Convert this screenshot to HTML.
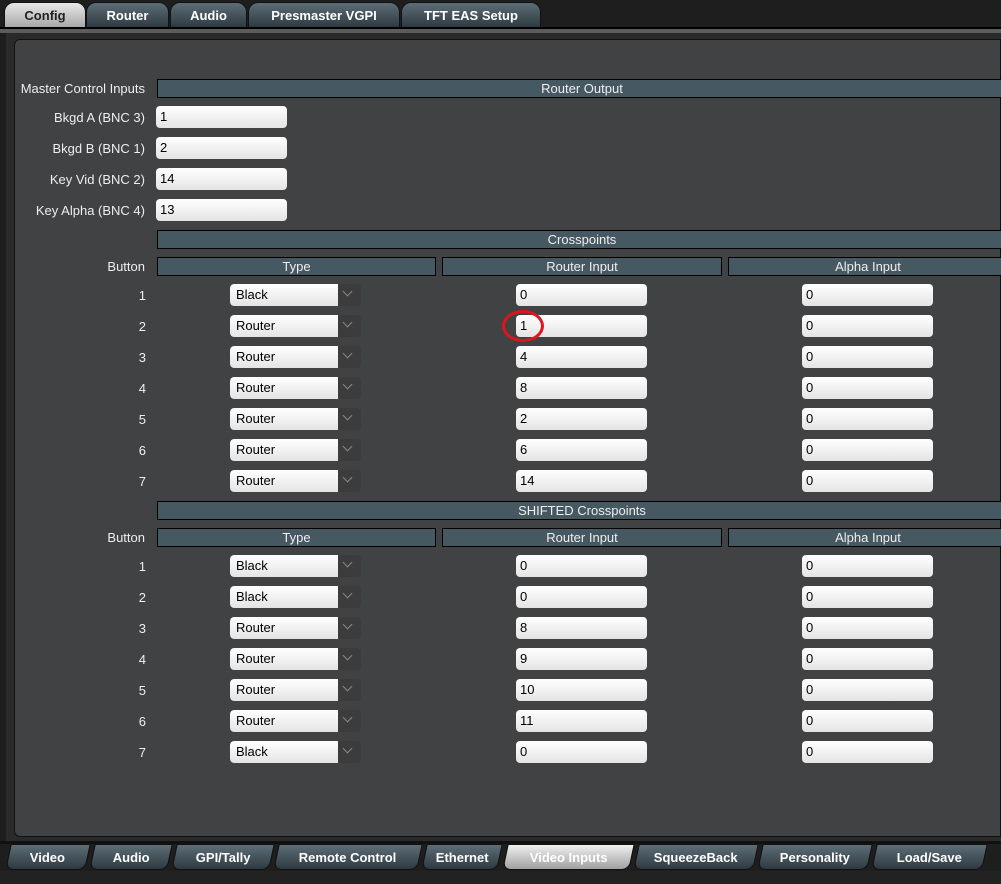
<!DOCTYPE html>
<html><head><meta charset="utf-8"><style>
*{box-sizing:border-box;margin:0;padding:0}
body{width:1001px;height:884px;background:#1e1e1e;position:relative;overflow:hidden;font-family:"Liberation Sans",sans-serif;font-size:13px;color:#fff}
.a{position:absolute}
.tab{position:absolute;top:2px;height:26px;border-radius:10px 10px 0 0;background:linear-gradient(#5d6d76,#2e3a41);color:#fff;font-weight:bold;font-size:13px;text-align:center;line-height:26px;border:1px solid #111}
.tab.on{background:linear-gradient(#e8e8e8,#a8a8a8);color:#222}
.btab{position:absolute;top:844px;height:26px;border-radius:0 0 8px 8px;background:linear-gradient(#5d6d76,#2e3a41);color:#fff;font-weight:bold;font-size:13px;text-align:center;line-height:26px;border:1px solid #111;transform:skewX(-12deg)}
.btab span{display:inline-block;transform:skewX(12deg)}
.btab.on{background:linear-gradient(#f0f0f0,#a0a0a0);color:#fff}
.hdr{position:absolute;height:19px;background:#465861;border:1px solid #000;text-align:center;line-height:17px;color:#eee}
.lbl{position:absolute;text-align:right;color:#eee;line-height:16px}
.in{position:absolute;width:131px;height:22px;background:linear-gradient(#fff,#e4e4e4);border-radius:4px;color:#000;padding-left:4px;line-height:22px}
.sel{position:absolute;left:230px;width:131px;height:22px;border-radius:4px;overflow:hidden;background:#3c3c3c}
.sel b{position:absolute;left:0;top:0;width:108px;height:22px;background:linear-gradient(#fff,#e4e4e4);color:#000;font-weight:normal;padding-left:6px;line-height:22px;border-radius:4px 0 0 4px}
.sel i{position:absolute;left:114px;top:4px;width:7px;height:7px;border-right:1px solid #888;border-bottom:1px solid #888;transform:rotate(45deg)}
.num{position:absolute;left:120px;width:26px;text-align:right;color:#eee}
</style></head><body>
<div class="tab on" style="left:4px;width:82px">Config</div>
<div class="tab" style="left:86px;width:83px">Router</div>
<div class="tab" style="left:170px;width:77px">Audio</div>
<div class="tab" style="left:248px;width:152px">Presmaster VGPI</div>
<div class="tab" style="left:401px;width:140px">TFT EAS Setup</div>
<div class="a" style="left:0;top:27px;width:1001px;height:2px;background:#000"></div>
<div class="a" style="left:0;top:29px;width:1001px;height:4px;background:#5c5c5c"></div>
<div class="a" style="left:6px;top:33px;width:995px;height:808px;background:#2a2a2a"></div>
<div class="a" style="left:14px;top:39px;width:987px;height:798px;background:#414243;border-radius:6px 0 0 6px;border:1px solid #111"></div>

<div class="lbl" style="left:0;top:81px;width:145px">Master Control Inputs</div>
<div class="hdr" style="left:157px;top:79px;width:850px">Router Output</div>
<div class="lbl" style="left:0;top:110px;width:145px">Bkgd A (BNC 3)</div><div class="in" style="left:156px;top:106px">1</div>
<div class="lbl" style="left:0;top:141px;width:145px">Bkgd B (BNC 1)</div><div class="in" style="left:156px;top:137px">2</div>
<div class="lbl" style="left:0;top:172px;width:145px">Key Vid (BNC 2)</div><div class="in" style="left:156px;top:168px">14</div>
<div class="lbl" style="left:0;top:203px;width:145px">Key Alpha (BNC 4)</div><div class="in" style="left:156px;top:199px">13</div>

<div class="hdr" style="left:157px;top:230px;width:850px">Crosspoints</div>
<div class="lbl" style="left:0;top:259px;width:145px">Button</div>
<div class="hdr" style="left:157px;top:257px;width:279px">Type</div>
<div class="hdr" style="left:442px;top:257px;width:280px">Router Input</div>
<div class="hdr" style="left:728px;top:257px;width:280px">Alpha Input</div>

<div class="num" style="top:288px">1</div><div class="sel" style="top:284px"><b>Black</b><i></i></div><div class="in" style="left:516px;top:284px">0</div><div class="in" style="left:802px;top:284px">0</div>
<div class="num" style="top:319px">2</div><div class="sel" style="top:315px"><b>Router</b><i></i></div><div class="in" style="left:516px;top:315px">1</div><div class="in" style="left:802px;top:315px">0</div>
<div class="num" style="top:350px">3</div><div class="sel" style="top:346px"><b>Router</b><i></i></div><div class="in" style="left:516px;top:346px">4</div><div class="in" style="left:802px;top:346px">0</div>
<div class="num" style="top:381px">4</div><div class="sel" style="top:377px"><b>Router</b><i></i></div><div class="in" style="left:516px;top:377px">8</div><div class="in" style="left:802px;top:377px">0</div>
<div class="num" style="top:412px">5</div><div class="sel" style="top:408px"><b>Router</b><i></i></div><div class="in" style="left:516px;top:408px">2</div><div class="in" style="left:802px;top:408px">0</div>
<div class="num" style="top:443px">6</div><div class="sel" style="top:439px"><b>Router</b><i></i></div><div class="in" style="left:516px;top:439px">6</div><div class="in" style="left:802px;top:439px">0</div>
<div class="num" style="top:474px">7</div><div class="sel" style="top:470px"><b>Router</b><i></i></div><div class="in" style="left:516px;top:470px">14</div><div class="in" style="left:802px;top:470px">0</div>
<div class="a" style="left:502px;top:310px;width:42px;height:32px;border:3px solid #e0141e;border-radius:50%"></div>

<div class="hdr" style="left:157px;top:501px;width:850px">SHIFTED Crosspoints</div>
<div class="lbl" style="left:0;top:530px;width:145px">Button</div>
<div class="hdr" style="left:157px;top:528px;width:279px">Type</div>
<div class="hdr" style="left:442px;top:528px;width:280px">Router Input</div>
<div class="hdr" style="left:728px;top:528px;width:280px">Alpha Input</div>

<div class="num" style="top:559px">1</div><div class="sel" style="top:555px"><b>Black</b><i></i></div><div class="in" style="left:516px;top:555px">0</div><div class="in" style="left:802px;top:555px">0</div>
<div class="num" style="top:590px">2</div><div class="sel" style="top:586px"><b>Black</b><i></i></div><div class="in" style="left:516px;top:586px">0</div><div class="in" style="left:802px;top:586px">0</div>
<div class="num" style="top:621px">3</div><div class="sel" style="top:617px"><b>Router</b><i></i></div><div class="in" style="left:516px;top:617px">8</div><div class="in" style="left:802px;top:617px">0</div>
<div class="num" style="top:652px">4</div><div class="sel" style="top:648px"><b>Router</b><i></i></div><div class="in" style="left:516px;top:648px">9</div><div class="in" style="left:802px;top:648px">0</div>
<div class="num" style="top:683px">5</div><div class="sel" style="top:679px"><b>Router</b><i></i></div><div class="in" style="left:516px;top:679px">10</div><div class="in" style="left:802px;top:679px">0</div>
<div class="num" style="top:714px">6</div><div class="sel" style="top:710px"><b>Router</b><i></i></div><div class="in" style="left:516px;top:710px">11</div><div class="in" style="left:802px;top:710px">0</div>
<div class="num" style="top:745px">7</div><div class="sel" style="top:741px"><b>Black</b><i></i></div><div class="in" style="left:516px;top:741px">0</div><div class="in" style="left:802px;top:741px">0</div>

<div class="a" style="left:0;top:841px;width:1001px;height:3px;background:#111"></div>
<div class="btab" style="left:8px;width:80px"><span>Video</span></div>
<div class="btab" style="left:92px;width:78px"><span>Audio</span></div>
<div class="btab" style="left:174px;width:98px"><span>GPI/Tally</span></div>
<div class="btab" style="left:276px;width:144px"><span>Remote Control</span></div>
<div class="btab" style="left:424px;width:76px"><span>Ethernet</span></div>
<div class="btab on" style="left:505px;width:127px"><span>Video Inputs</span></div>
<div class="btab" style="left:636px;width:120px"><span>SqueezeBack</span></div>
<div class="btab" style="left:760px;width:110px"><span>Personality</span></div>
<div class="btab" style="left:874px;width:111px"><span>Load/Save</span></div>
<div class="a" style="left:0;top:871px;width:1001px;height:13px;background:#222"></div>
</body></html>
